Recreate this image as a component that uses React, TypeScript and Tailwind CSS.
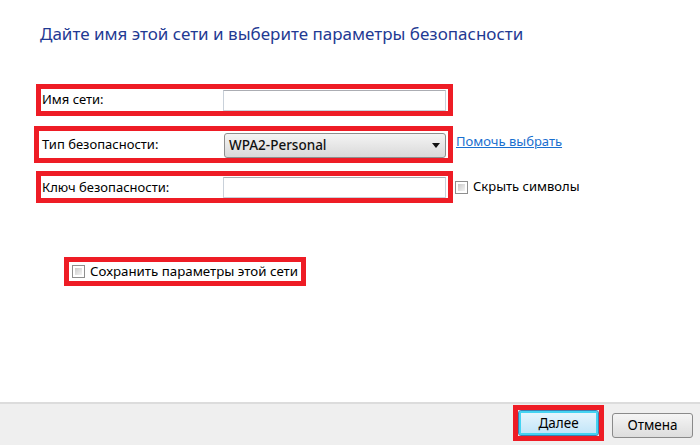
import React from "react";

const font = { fontFamily: '"Noto Sans", "Open Sans", sans-serif' };

function CheckBox() {
  return (
    <span className="inline-block w-[13px] h-[13px] border border-[#8f8f8f] bg-white p-[2px] shrink-0">
      <span className="block w-full h-full bg-gradient-to-br from-[#cbcbcb] to-[#f4f4f4]" />
    </span>
  );
}

function TextInput() {
  return <div className="w-[223px] h-[21px] border border-[#c9d1da] border-t-[#abadb3] bg-white" />;
}

export default function App() {
  return (
    <div className="w-[700px] h-[445px] bg-white flex flex-col text-[13px] text-black" style={font}>
      <div className="flex-1 flex flex-col">
        <h1 className="pl-[40px] pt-[23px] text-[17px] leading-[22px] text-[#1f3a93] font-normal">
          Дайте имя этой сети и выберите параметры безопасности
        </h1>

        <div className="flex flex-col pl-[36px] mt-[39px]">
          {/* network name */}
          <div className="flex items-center">
            <div className="w-[417px] h-[32px] border-[5px] border-[#ee1c25] flex items-start">
              <span className="pl-[1px] pt-[1px] w-[182px] leading-[18px]">Имя сети:</span>
              <div className="mt-[1px]">
                <TextInput />
              </div>
            </div>
          </div>

          {/* security type */}
          <div className="flex items-center mt-[10px] -ml-[2px]">
            <div className="w-[419px] h-[37px] border-[5px] border-[#ee1c25] flex items-start">
              <span className="pl-[3px] pt-[4px] w-[185px] leading-[18px]">Тип безопасности:</span>
              <div className="mt-[2px] w-[222px] h-[25px] rounded-[3px] border border-[#8e8e8e] bg-gradient-to-b from-[#f4f4f4] to-[#d9d9d9] flex items-center justify-between pl-[4px] pr-[5px]">
                <span className="text-[13.5px] font-medium text-[#111]">WPA2-Personal</span>
                <svg width="8" height="5" viewBox="0 0 8 5">
                  <path d="M0 0 H8 L4 5 Z" fill="#111" />
                </svg>
              </div>
            </div>
            <a className="ml-[3px] text-[#1a6fcf] underline -mt-[6px]">Помочь выбрать</a>
          </div>

          {/* security key */}
          <div className="flex items-center mt-[8px]">
            <div className="w-[417px] h-[32px] border-[5px] border-[#ee1c25] flex items-start">
              <span className="pl-[1px] pt-[2px] w-[182px] leading-[18px]">Ключ безопасности:</span>
              <div className="mt-[1px]">
                <TextInput />
              </div>
            </div>
            <label className="ml-[2px] flex items-center gap-[5px]">
              <CheckBox />
              <span>Скрыть символы</span>
            </label>
          </div>

          {/* remember network */}
          <div className="flex mt-[54px] pl-[28px]">
            <div className="w-[242px] h-[29px] border-[5px] border-[#ee1c25] flex items-center gap-[5px] pl-[3px]">
              <CheckBox />
              <span className="text-[13.3px]">Сохранить параметры этой сети</span>
            </div>
          </div>
        </div>
      </div>

      <div className="h-[43px] border-t-2 border-[#dcdcdc] bg-[#efefef] flex items-start justify-end pr-[7px] pt-[1px]">
        <div className="border-[5px] border-[#ee1c25] p-0">
          <button className="w-[81px] h-[26px] rounded-[3px] border border-[#3c7fb1] bg-gradient-to-b from-[#e9f6fd] to-[#bfe4f8] shadow-[inset_0_0_0_2px_#44d3f2] text-[13.5px]">
            Далее
          </button>
        </div>
        <button className="ml-[8px] mt-[8px] w-[81px] h-[25px] rounded-[3px] border border-[#8a8a8a] bg-gradient-to-b from-[#f5f5f5] to-[#dddddd] text-[13.5px]">
          Отмена
        </button>
      </div>
    </div>
  );
}
